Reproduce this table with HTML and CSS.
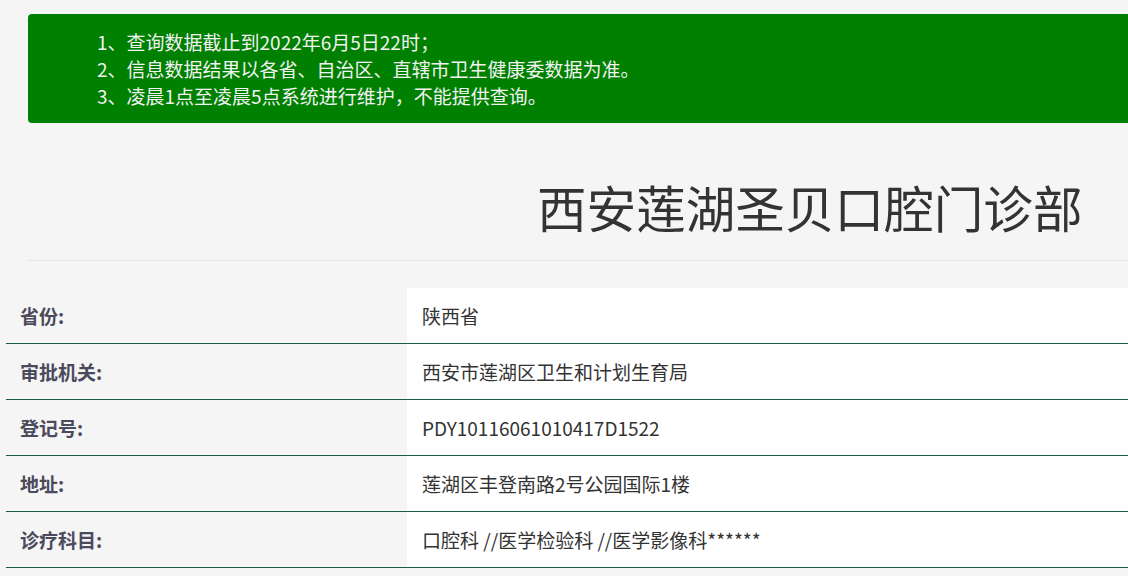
FILE: index.html
```html
<!DOCTYPE html>
<html lang="zh-CN">
<head>
    <meta charset="UTF-8">
    <title>西安莲湖圣贝口腔门诊部</title>
    <link rel="stylesheet" href="styles.css">
</head>
<body>
    <div class="page">
        <div class="notice">
            <ul>
                <li>1、查询数据截止到2022年6月5日22时；</li>
                <li>2、信息数据结果以各省、自治区、直辖市卫生健康委数据为准。</li>
                <li>3、凌晨1点至凌晨5点系统进行维护，不能提供查询。</li>
            </ul>
        </div>
        <h1 class="title">西安莲湖圣贝口腔门诊部</h1>
        <hr class="divider">
        <table class="info">
            <tr>
                <th>省份:</th>
                <td>陕西省</td>
            </tr>
            <tr>
                <th>审批机关:</th>
                <td>西安市莲湖区卫生和计划生育局</td>
            </tr>
            <tr>
                <th>登记号:</th>
                <td>PDY10116061010417D1522</td>
            </tr>
            <tr>
                <th>地址:</th>
                <td>莲湖区丰登南路2号公园国际1楼</td>
            </tr>
            <tr>
                <th>诊疗科目:</th>
                <td>口腔科 //医学检验科 //医学影像科******</td>
            </tr>
        </table>
    </div>
</body>
</html>
```

FILE: styles.css
```css
html, body {
    margin: 0;
    padding: 0;
    background: #f5f5f5;
    overflow: hidden;
}
body {
    font-family: "Noto Sans CJK SC", "Noto Sans", sans-serif;
    color: #333;
}
.page {
    width: 1300px;
    padding-top: 14px;
}
.notice {
    margin-left: 28px;
    background: #008000;
    border-radius: 4px 0 0 4px;
    color: #f2f2f2;
    font-size: 19px;
    line-height: 27px;
    padding: 14px 0;
}
.notice ul {
    list-style: none;
    margin: 0;
    padding-left: 69px;
}
.title {
    margin: 0;
    padding: 46px 0 0 509px;
    margin-left: 28px;
    font-size: 49.6px;
    font-weight: normal;
    line-height: 74px;
    color: #333;
}
.divider {
    margin: 17px 0 0 28px;
    border: 0;
    border-top: 1px solid #e6e6e6;
    height: 0;
}
.info {
    margin: 27px 0 0 6px;
    border-collapse: collapse;
    width: 1294px;
    font-size: 19px;
}
.info tr {
    border-bottom: 1px solid #1d5c42;
}
.info th, .info td {
    height: 55px;
    padding: 0 0 0 15px;
    text-align: left;
    vertical-align: middle;
}
.info th {
    width: 387px;
    padding-left: 14px;
    background: #f5f5f5;
    color: #4b4a5c;
    font-weight: bold;
}
.info td {
    background: #fff;
    color: #333;
}
```
